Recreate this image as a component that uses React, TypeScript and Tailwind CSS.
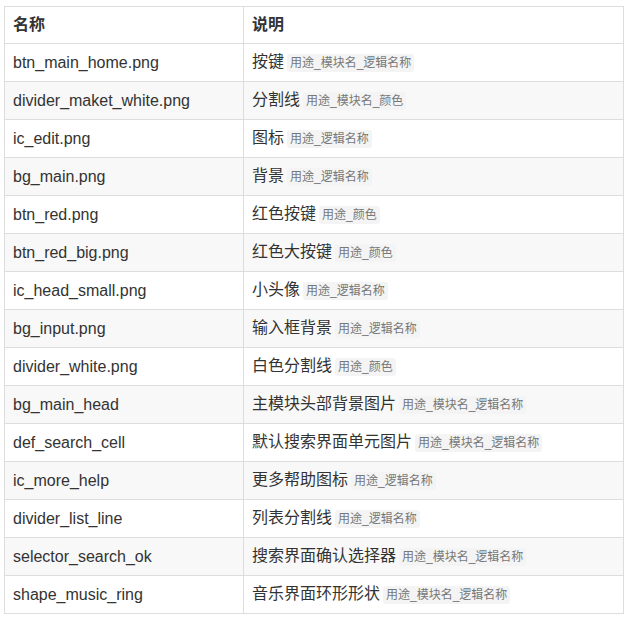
import React from 'react';

const rows: [string, string, string][] = [
  ['btn_main_home.png', '按键', '用途_模块名_逻辑名称'],
  ['divider_maket_white.png', '分割线', '用途_模块名_颜色'],
  ['ic_edit.png', '图标', '用途_逻辑名称'],
  ['bg_main.png', '背景', '用途_逻辑名称'],
  ['btn_red.png', '红色按键', '用途_颜色'],
  ['btn_red_big.png', '红色大按键', '用途_颜色'],
  ['ic_head_small.png', '小头像', '用途_逻辑名称'],
  ['bg_input.png', '输入框背景', '用途_逻辑名称'],
  ['divider_white.png', '白色分割线', '用途_颜色'],
  ['bg_main_head', '主模块头部背景图片', '用途_模块名_逻辑名称'],
  ['def_search_cell', '默认搜索界面单元图片', '用途_模块名_逻辑名称'],
  ['ic_more_help', '更多帮助图标', '用途_逻辑名称'],
  ['divider_list_line', '列表分割线', '用途_逻辑名称'],
  ['selector_search_ok', '搜索界面确认选择器', '用途_模块名_逻辑名称'],
  ['shape_music_ring', '音乐界面环形形状', '用途_模块名_逻辑名称'],
];

const font = { fontFamily: '"Liberation Sans", "Noto Sans CJK SC", sans-serif' };

export default function App() {
  return (
    <div className="bg-white w-[632px] h-[620px] pt-[6px] pl-[4px]" style={font}>
      <table className="border-collapse w-[620px] text-[16px] leading-[22px] text-[#333]">
        <thead>
          <tr className="bg-white">
            <th className="w-[239px] h-[37px] border border-[#ddd] px-[8px] text-left font-bold">名称</th>
            <th className="h-[37px] border border-[#ddd] px-[8px] text-left font-bold">说明</th>
          </tr>
        </thead>
        <tbody>
          {rows.map(([name, desc, code], i) => (
            <tr key={name} className={i % 2 === 1 ? 'bg-[#f8f8f8]' : 'bg-white'}>
              <td className="h-[38px] border border-[#ddd] px-[8px]">{name}</td>
              <td className="h-[38px] border border-[#ddd] px-[8px]">
                {desc}
                <span className="ml-[3px] px-[3px] py-[2px] rounded-[3px] bg-[#f4f4f4] text-[12px] text-[#777]">
                  {code}
                </span>
              </td>
            </tr>
          ))}
        </tbody>
      </table>
    </div>
  );
}
